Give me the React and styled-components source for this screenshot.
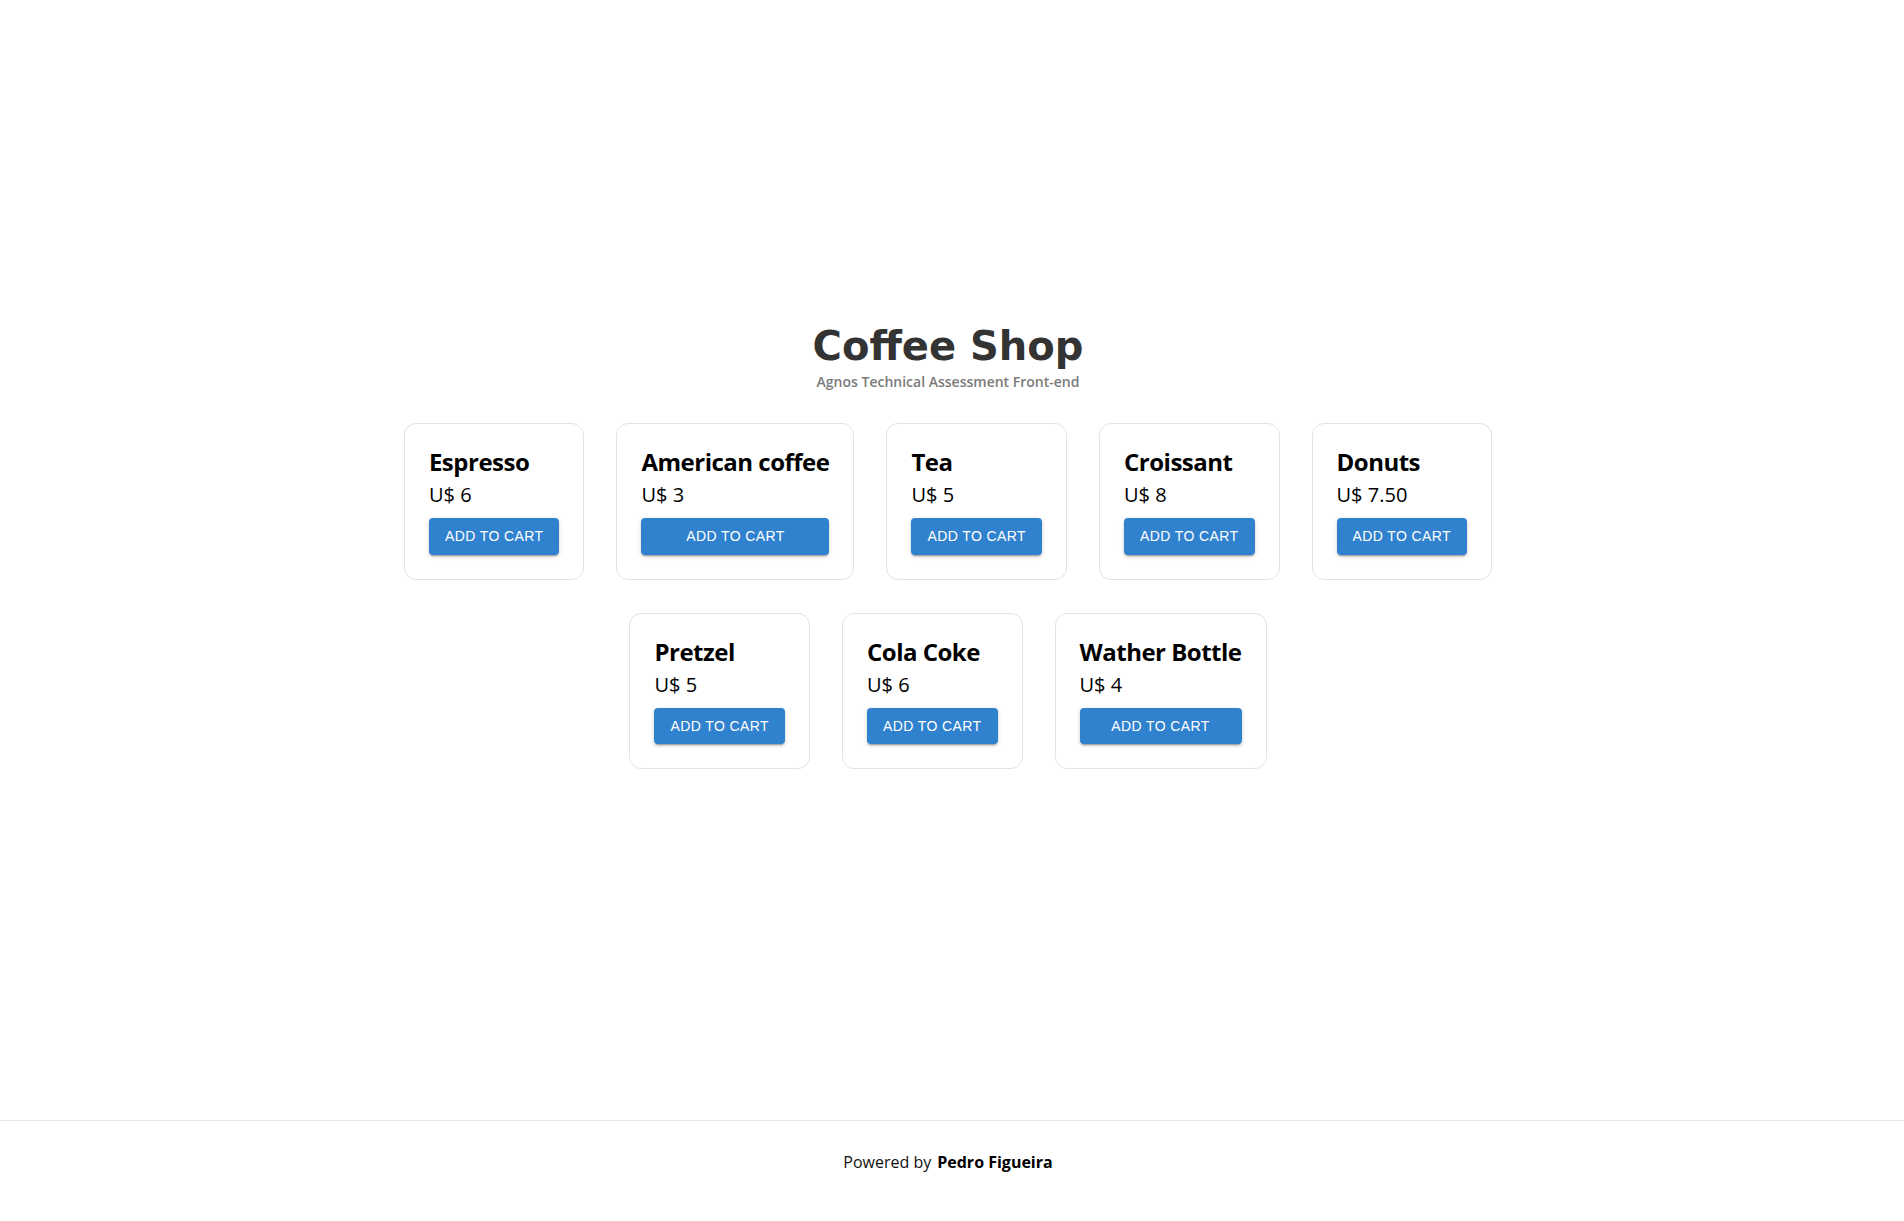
import React from "react";
import styled, { createGlobalStyle } from "styled-components";

const GlobalStyle = createGlobalStyle`
  * { box-sizing: border-box; }
  body {
    margin: 0;
    background: #ffffff;
    font-family: "Open Sans", "Noto Sans", sans-serif;
    color: #000;
  }
`;

const Page = styled.div`
  min-height: 100vh;
  display: flex;
  flex-direction: column;
`;

const Main = styled.main`
  flex: 1;
  display: flex;
  flex-direction: column;
  align-items: center;
  padding: 322px 8px 0 0;
`;

const Title = styled.h1`
  margin: 0;
  font-family: "DejaVu Sans", "Open Sans", sans-serif;
  font-size: 40px;
  line-height: 48px;
  font-weight: 700;
  color: #333333;
`;

const Subtitle = styled.p`
  margin: 4px 0 0;
  font-size: 14px;
  line-height: 16px;
  font-weight: 600;
  color: #7a7a7a;
`;

const Grid = styled.div`
  margin-top: 33px;
  max-width: 1160px;
  display: flex;
  flex-wrap: wrap;
  justify-content: center;
  gap: 33px 32px;
`;

const Card = styled.div`
  display: flex;
  flex-direction: column;
  padding: 24px;
  border: 1px solid #e3e3e3;
  border-radius: 12px;
  background: #fff;
`;

const Name = styled.h2`
  margin: 2px 0 0;
  font-size: 24px;
  line-height: 24px;
  font-weight: 700;
  letter-spacing: -0.5px;
  white-space: nowrap;
`;

const Price = styled.div`
  margin-top: 9px;
  font-size: 20px;
  line-height: 24px;
`;

const Button = styled.button`
  margin-top: 11px;
  padding: 6px 16px;
  border: 0;
  border-radius: 4px;
  background: #3182ce;
  color: #fff;
  font-family: "Liberation Sans", Arial, sans-serif;
  font-size: 14px;
  line-height: 24.5px;
  letter-spacing: 0.4px;
  text-transform: uppercase;
  white-space: nowrap;
  cursor: pointer;
  box-shadow: 0 3px 1px -2px rgba(0, 0, 0, 0.2), 0 2px 2px 0 rgba(0, 0, 0, 0.14),
    0 1px 5px 0 rgba(0, 0, 0, 0.12);
`;

const Footer = styled.footer`
  height: 101px;
  border-top: 1px solid #e6e6e6;
  display: flex;
  justify-content: center;
  align-items: flex-start;
  padding: 29px 8px 0 0;
  font-size: 16px;
  line-height: 24px;
  color: #111;
`;

const Author = styled.strong`
  margin-left: 6px;
  font-weight: 700;
  color: #000;
`;

const products = [
  { name: "Espresso", price: "6" },
  { name: "American coffee", price: "3" },
  { name: "Tea", price: "5" },
  { name: "Croissant", price: "8" },
  { name: "Donuts", price: "7.50" },
  { name: "Pretzel", price: "5" },
  { name: "Cola Coke", price: "6" },
  { name: "Wather Bottle", price: "4" },
];

export default function App() {
  return (
    <Page>
      <GlobalStyle />
      <Main>
        <Title>Coffee Shop</Title>
        <Subtitle>Agnos Technical Assessment Front-end</Subtitle>
        <Grid>
          {products.map((product) => (
            <Card key={product.name}>
              <Name>{product.name}</Name>
              <Price>U$ {product.price}</Price>
              <Button>Add to cart</Button>
            </Card>
          ))}
        </Grid>
      </Main>
      <Footer>
        Powered by <Author>Pedro Figueira</Author>
      </Footer>
    </Page>
  );
}
